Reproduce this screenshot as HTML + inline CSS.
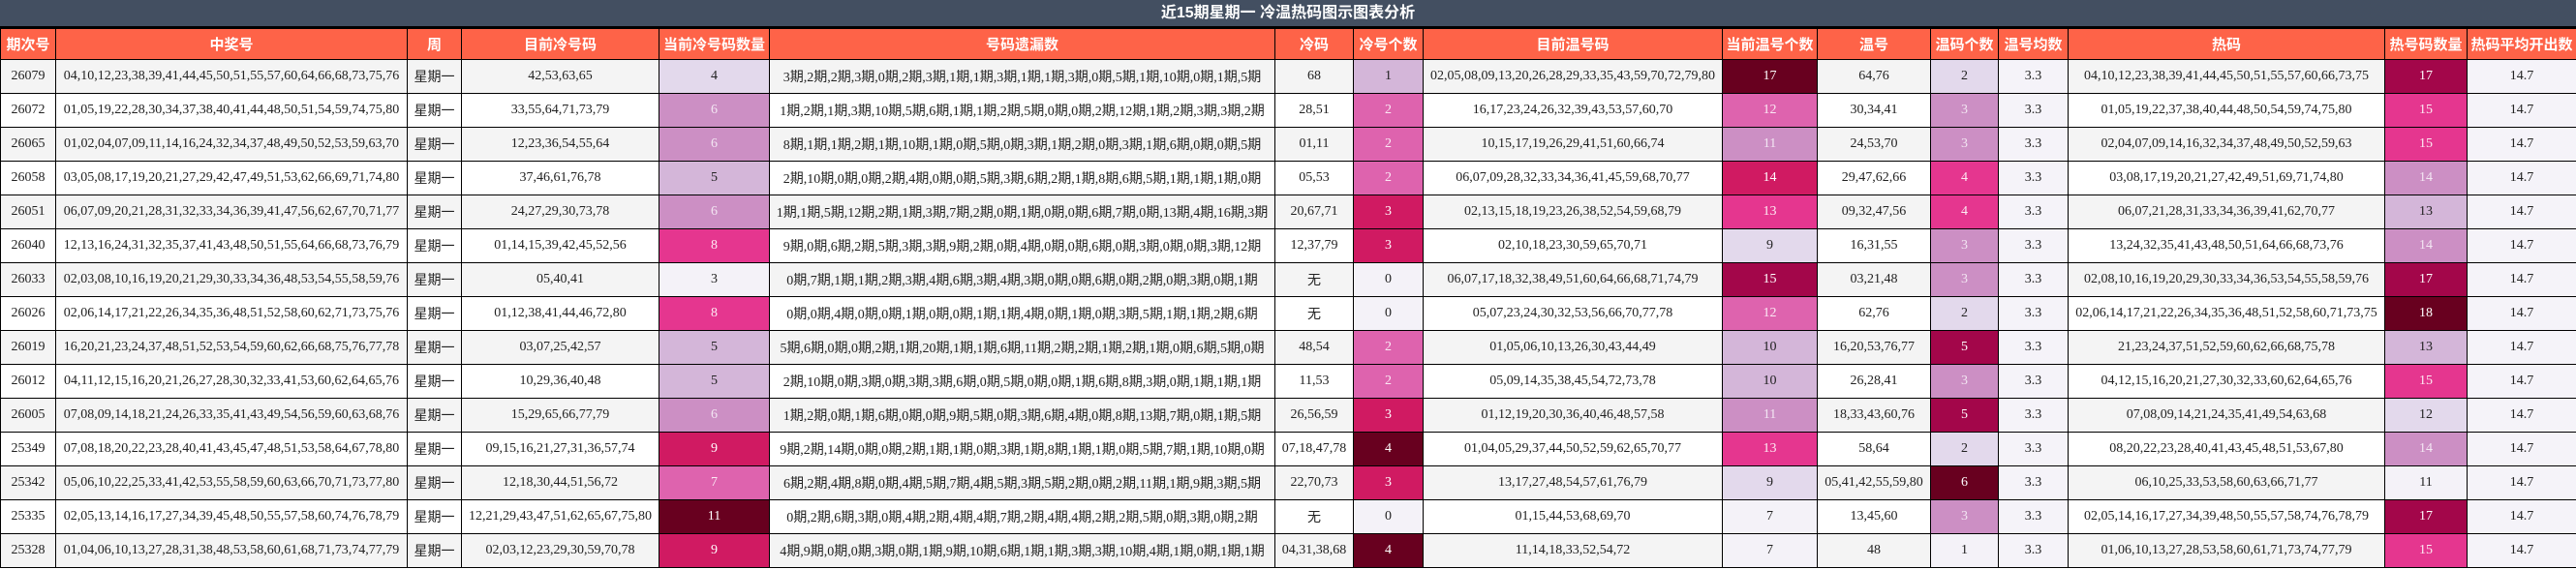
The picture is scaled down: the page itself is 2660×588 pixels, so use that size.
<!DOCTYPE html>
<html><head><meta charset="utf-8">
<style>
html,body{margin:0;padding:0;background:#fff;width:2660px;height:588px;overflow:hidden}
.t{height:27px;background:#434f61;color:#fff;font:bold 16px "Liberation Sans","Noto Sans CJK SC",sans-serif;text-align:center;line-height:27px;border-bottom:2px solid #000;box-sizing:content-box}
table{border-collapse:collapse;table-layout:fixed;width:2660px}
td,th{border:1px solid #000;text-align:center;padding:0;white-space:nowrap;overflow:hidden}
th{background:#fe6348;color:#fff;font:bold 15px "Liberation Sans","Noto Sans CJK SC",sans-serif;height:31px}
td{font:14px "Liberation Serif","Noto Sans CJK SC",serif;color:#222;height:34px}
tr.g td{background:#f4f4f4}
tr.w td{background:#fff}
tr td.l{background:#f5f3f9}
tr td.p1{background:#f4f2f8;color:#222}
tr td.p2{background:#e3d9ec;color:#222}
tr td.p3{background:#d4b6d9;color:#222}
tr td.p4{background:#cc8fc4;color:#f3e6f3}
tr td.p5{background:#de63ae;color:#fbe9f4}
tr td.p6{background:#e5368f;color:#fdeaf3}
tr td.p7{background:#d01a62;color:#fff}
tr td.p8{background:#a3064a;color:#fff}
tr td.p9{background:#68001f;color:#fff}
</style></head><body>
<div class="t">近15期星期一 冷温热码图示图表分析</div>
<table>
<colgroup><col style="width:57px"><col style="width:363px"><col style="width:56px"><col style="width:204px"><col style="width:114px"><col style="width:522px"><col style="width:81px"><col style="width:72px"><col style="width:309px"><col style="width:98px"><col style="width:117px"><col style="width:70px"><col style="width:72px"><col style="width:327px"><col style="width:85px"><col style="width:113px"></colgroup>
<tr><th>期次号</th><th>中奖号</th><th>周</th><th>目前冷号码</th><th>当前冷号码数量</th><th>号码遗漏数</th><th>冷码</th><th>冷号个数</th><th>目前温号码</th><th>当前温号个数</th><th>温号</th><th>温码个数</th><th>温号均数</th><th>热码</th><th>热号码数量</th><th>热码平均开出数</th></tr>
<tr class="g"><td>26079</td><td>04,10,12,23,38,39,41,44,45,50,51,55,57,60,64,66,68,73,75,76</td><td>星期一</td><td>42,53,63,65</td><td class="p2">4</td><td>3期,2期,2期,3期,0期,2期,3期,1期,1期,3期,1期,1期,3期,0期,5期,1期,10期,0期,1期,5期</td><td>68</td><td class="p3">1</td><td>02,05,08,09,13,20,26,28,29,33,35,43,59,70,72,79,80</td><td class="p9">17</td><td>64,76</td><td class="p2">2</td><td class="l">3.3</td><td>04,10,12,23,38,39,41,44,45,50,51,55,57,60,66,73,75</td><td class="p8">17</td><td class="l">14.7</td></tr>
<tr class="w"><td>26072</td><td>01,05,19,22,28,30,34,37,38,40,41,44,48,50,51,54,59,74,75,80</td><td>星期一</td><td>33,55,64,71,73,79</td><td class="p4">6</td><td>1期,2期,1期,3期,10期,5期,6期,1期,1期,2期,5期,0期,0期,2期,12期,1期,2期,3期,3期,2期</td><td>28,51</td><td class="p5">2</td><td>16,17,23,24,26,32,39,43,53,57,60,70</td><td class="p5">12</td><td>30,34,41</td><td class="p4">3</td><td class="l">3.3</td><td>01,05,19,22,37,38,40,44,48,50,54,59,74,75,80</td><td class="p6">15</td><td class="l">14.7</td></tr>
<tr class="g"><td>26065</td><td>01,02,04,07,09,11,14,16,24,32,34,37,48,49,50,52,53,59,63,70</td><td>星期一</td><td>12,23,36,54,55,64</td><td class="p4">6</td><td>8期,1期,1期,2期,1期,10期,1期,0期,5期,0期,3期,1期,2期,0期,3期,1期,6期,0期,0期,5期</td><td>01,11</td><td class="p5">2</td><td>10,15,17,19,26,29,41,51,60,66,74</td><td class="p4">11</td><td>24,53,70</td><td class="p4">3</td><td class="l">3.3</td><td>02,04,07,09,14,16,32,34,37,48,49,50,52,59,63</td><td class="p6">15</td><td class="l">14.7</td></tr>
<tr class="w"><td>26058</td><td>03,05,08,17,19,20,21,27,29,42,47,49,51,53,62,66,69,71,74,80</td><td>星期一</td><td>37,46,61,76,78</td><td class="p3">5</td><td>2期,10期,0期,0期,2期,4期,0期,0期,5期,3期,6期,2期,1期,8期,6期,5期,1期,1期,1期,0期</td><td>05,53</td><td class="p5">2</td><td>06,07,09,28,32,33,34,36,41,45,59,68,70,77</td><td class="p7">14</td><td>29,47,62,66</td><td class="p6">4</td><td class="l">3.3</td><td>03,08,17,19,20,21,27,42,49,51,69,71,74,80</td><td class="p4">14</td><td class="l">14.7</td></tr>
<tr class="g"><td>26051</td><td>06,07,09,20,21,28,31,32,33,34,36,39,41,47,56,62,67,70,71,77</td><td>星期一</td><td>24,27,29,30,73,78</td><td class="p4">6</td><td>1期,1期,5期,12期,2期,1期,3期,7期,2期,0期,1期,0期,0期,6期,7期,0期,13期,4期,16期,3期</td><td>20,67,71</td><td class="p7">3</td><td>02,13,15,18,19,23,26,38,52,54,59,68,79</td><td class="p6">13</td><td>09,32,47,56</td><td class="p6">4</td><td class="l">3.3</td><td>06,07,21,28,31,33,34,36,39,41,62,70,77</td><td class="p3">13</td><td class="l">14.7</td></tr>
<tr class="w"><td>26040</td><td>12,13,16,24,31,32,35,37,41,43,48,50,51,55,64,66,68,73,76,79</td><td>星期一</td><td>01,14,15,39,42,45,52,56</td><td class="p6">8</td><td>9期,0期,6期,2期,5期,3期,3期,9期,2期,0期,4期,0期,0期,6期,0期,3期,0期,0期,3期,12期</td><td>12,37,79</td><td class="p7">3</td><td>02,10,18,23,30,59,65,70,71</td><td class="p2">9</td><td>16,31,55</td><td class="p4">3</td><td class="l">3.3</td><td>13,24,32,35,41,43,48,50,51,64,66,68,73,76</td><td class="p4">14</td><td class="l">14.7</td></tr>
<tr class="g"><td>26033</td><td>02,03,08,10,16,19,20,21,29,30,33,34,36,48,53,54,55,58,59,76</td><td>星期一</td><td>05,40,41</td><td class="p1">3</td><td>0期,7期,1期,1期,2期,3期,4期,6期,3期,4期,3期,0期,0期,6期,0期,2期,0期,3期,0期,1期</td><td>无</td><td class="p1">0</td><td>06,07,17,18,32,38,49,51,60,64,66,68,71,74,79</td><td class="p8">15</td><td>03,21,48</td><td class="p4">3</td><td class="l">3.3</td><td>02,08,10,16,19,20,29,30,33,34,36,53,54,55,58,59,76</td><td class="p8">17</td><td class="l">14.7</td></tr>
<tr class="w"><td>26026</td><td>02,06,14,17,21,22,26,34,35,36,48,51,52,58,60,62,71,73,75,76</td><td>星期一</td><td>01,12,38,41,44,46,72,80</td><td class="p6">8</td><td>0期,0期,4期,0期,0期,1期,0期,0期,1期,1期,4期,0期,1期,0期,3期,5期,1期,1期,2期,6期</td><td>无</td><td class="p1">0</td><td>05,07,23,24,30,32,53,56,66,70,77,78</td><td class="p5">12</td><td>62,76</td><td class="p2">2</td><td class="l">3.3</td><td>02,06,14,17,21,22,26,34,35,36,48,51,52,58,60,71,73,75</td><td class="p9">18</td><td class="l">14.7</td></tr>
<tr class="g"><td>26019</td><td>16,20,21,23,24,37,48,51,52,53,54,59,60,62,66,68,75,76,77,78</td><td>星期一</td><td>03,07,25,42,57</td><td class="p3">5</td><td>5期,6期,0期,0期,2期,1期,20期,1期,1期,6期,11期,2期,2期,1期,2期,1期,0期,6期,5期,0期</td><td>48,54</td><td class="p5">2</td><td>01,05,06,10,13,26,30,43,44,49</td><td class="p3">10</td><td>16,20,53,76,77</td><td class="p8">5</td><td class="l">3.3</td><td>21,23,24,37,51,52,59,60,62,66,68,75,78</td><td class="p3">13</td><td class="l">14.7</td></tr>
<tr class="w"><td>26012</td><td>04,11,12,15,16,20,21,26,27,28,30,32,33,41,53,60,62,64,65,76</td><td>星期一</td><td>10,29,36,40,48</td><td class="p3">5</td><td>2期,10期,0期,3期,0期,3期,3期,6期,0期,5期,0期,0期,1期,6期,8期,3期,0期,1期,1期,1期</td><td>11,53</td><td class="p5">2</td><td>05,09,14,35,38,45,54,72,73,78</td><td class="p3">10</td><td>26,28,41</td><td class="p4">3</td><td class="l">3.3</td><td>04,12,15,16,20,21,27,30,32,33,60,62,64,65,76</td><td class="p6">15</td><td class="l">14.7</td></tr>
<tr class="g"><td>26005</td><td>07,08,09,14,18,21,24,26,33,35,41,43,49,54,56,59,60,63,68,76</td><td>星期一</td><td>15,29,65,66,77,79</td><td class="p4">6</td><td>1期,2期,0期,1期,6期,0期,0期,9期,5期,0期,3期,6期,4期,0期,8期,13期,7期,0期,1期,5期</td><td>26,56,59</td><td class="p7">3</td><td>01,12,19,20,30,36,40,46,48,57,58</td><td class="p4">11</td><td>18,33,43,60,76</td><td class="p8">5</td><td class="l">3.3</td><td>07,08,09,14,21,24,35,41,49,54,63,68</td><td class="p2">12</td><td class="l">14.7</td></tr>
<tr class="w"><td>25349</td><td>07,08,18,20,22,23,28,40,41,43,45,47,48,51,53,58,64,67,78,80</td><td>星期一</td><td>09,15,16,21,27,31,36,57,74</td><td class="p7">9</td><td>9期,2期,14期,0期,0期,2期,1期,1期,0期,3期,1期,8期,1期,1期,0期,5期,7期,1期,10期,0期</td><td>07,18,47,78</td><td class="p9">4</td><td>01,04,05,29,37,44,50,52,59,62,65,70,77</td><td class="p6">13</td><td>58,64</td><td class="p2">2</td><td class="l">3.3</td><td>08,20,22,23,28,40,41,43,45,48,51,53,67,80</td><td class="p4">14</td><td class="l">14.7</td></tr>
<tr class="g"><td>25342</td><td>05,06,10,22,25,33,41,42,53,55,58,59,60,63,66,70,71,73,77,80</td><td>星期一</td><td>12,18,30,44,51,56,72</td><td class="p5">7</td><td>6期,2期,4期,8期,0期,4期,5期,7期,4期,5期,3期,5期,2期,0期,2期,11期,1期,9期,3期,5期</td><td>22,70,73</td><td class="p7">3</td><td>13,17,27,48,54,57,61,76,79</td><td class="p2">9</td><td>05,41,42,55,59,80</td><td class="p9">6</td><td class="l">3.3</td><td>06,10,25,33,53,58,60,63,66,71,77</td><td class="p1">11</td><td class="l">14.7</td></tr>
<tr class="w"><td>25335</td><td>02,05,13,14,16,17,27,34,39,45,48,50,55,57,58,60,74,76,78,79</td><td>星期一</td><td>12,21,29,43,47,51,62,65,67,75,80</td><td class="p9">11</td><td>0期,2期,6期,3期,0期,4期,2期,4期,4期,7期,2期,4期,4期,2期,2期,5期,0期,3期,0期,2期</td><td>无</td><td class="p1">0</td><td>01,15,44,53,68,69,70</td><td class="p1">7</td><td>13,45,60</td><td class="p4">3</td><td class="l">3.3</td><td>02,05,14,16,17,27,34,39,48,50,55,57,58,74,76,78,79</td><td class="p8">17</td><td class="l">14.7</td></tr>
<tr class="g"><td>25328</td><td>01,04,06,10,13,27,28,31,38,48,53,58,60,61,68,71,73,74,77,79</td><td>星期一</td><td>02,03,12,23,29,30,59,70,78</td><td class="p7">9</td><td>4期,9期,0期,0期,3期,0期,1期,9期,10期,6期,1期,1期,3期,3期,10期,4期,1期,0期,1期,1期</td><td>04,31,38,68</td><td class="p9">4</td><td>11,14,18,33,52,54,72</td><td class="p1">7</td><td>48</td><td class="p1">1</td><td class="l">3.3</td><td>01,06,10,13,27,28,53,58,60,61,71,73,74,77,79</td><td class="p6">15</td><td class="l">14.7</td></tr>
</table>
</body></html>
